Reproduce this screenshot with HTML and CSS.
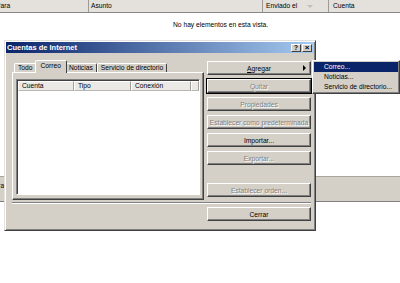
FILE: index.html
```html
<!DOCTYPE html>
<html lang="es">
<head>
    <meta charset="UTF-8">
    <title>Cuentas de Internet</title>
    <link rel="stylesheet" href="styles.css">
</head>
<body>

    <!-- Message list behind the dialog -->
    <div class="list-header">
        <div class="col col-para"><span class="clip">Para</span></div>
        <div class="col col-asunto">Asunto</div>
        <div class="col col-enviado">Enviado el<span class="sort"></span></div>
        <div class="col col-cuenta">Cuenta</div>
    </div>
    <div class="empty">No hay elementos en esta vista.</div>
    <div class="preview-bar"><span class="clip-r">Para</span></div>

    <!-- Internet accounts dialog -->
    <div class="dialog">
        <div class="titlebar">
            <span class="title">Cuentas de Internet</span>
            <span class="cap-btn">?</span>
            <span class="cap-btn close">×</span>
        </div>

        <div class="dialog-body">
            <div class="top-row">
                <div class="tabs-col">
                    <div class="tabs">
                        <div class="tab">Todo</div>
                        <div class="tab active">Correo</div>
                        <div class="tab">Noticias</div>
                        <div class="tab">Servicio de directorio</div>
                    </div>
                    <div class="panel">
                        <div class="accounts">
                            <div class="acc-header">
                                <div class="acc-col acc-cuenta">Cuenta</div>
                                <div class="acc-col acc-tipo">Tipo</div>
                                <div class="acc-col acc-conexion">Conexión</div>
                                <div class="acc-col acc-rest"></div>
                            </div>
                        </div>
                    </div>
                </div>

                <div class="buttons">
                    <div class="btn"><span><u>A</u>gregar</span><span class="arrow"></span></div>
                    <div class="btn disabled default">Quitar</div>
                    <div class="btn disabled">Propiedades</div>
                    <div class="btn disabled">Establecer como predeterminada</div>
                    <div class="btn">Importar...</div>
                    <div class="btn disabled">Exportar...</div>
                    <div class="btn disabled order">Establecer orden...</div>
                </div>
            </div>

            <div class="separator"></div>

            <div class="footer">
                <div class="btn">Cerrar</div>
            </div>
        </div>
    </div>

    <!-- Popup menu of the Agregar button -->
    <div class="menu">
        <div class="menu-item active">Correo...</div>
        <div class="menu-item">Noticias...</div>
        <div class="menu-item">Servicio de directorio...</div>
    </div>

</body>
</html>
```

FILE: styles.css
```css
body {
    margin: 0;
    width: 400px;
    height: 283px;
    overflow: hidden;
    position: relative;
    background: #fff;
    color: #000;
    font-family: "Liberation Sans", Arial, sans-serif;
    font-size: 6.7px;
}

/* Message list header */
.list-header {
    display: flex;
    height: 12px;
    background: #e4e1dc;
    border-bottom: 1px solid #8a8884;
}

.col {
    box-sizing: border-box;
    height: 12px;
    line-height: 12px;
    border-right: 1px solid #9c9a96;
    white-space: nowrap;
    overflow: hidden;
}

.col-para {
    width: 89px;
}

.clip {
    margin-left: -4px;
}

.col-asunto {
    width: 174px;
    padding-left: 2px;
}

.col-enviado {
    width: 66px;
    padding-left: 3px;
    display: flex;
    align-items: center;
}

.sort {
    width: 0;
    height: 0;
    margin-left: 10px;
    border-left: 3px solid transparent;
    border-right: 3px solid transparent;
    border-top: 3px solid #c0beb8;
}

.col-cuenta {
    flex: 1;
    padding-left: 4px;
    border-right: none;
}

.empty {
    height: 11px;
    line-height: 11px;
    margin-top: 6px;
    padding-left: 173px;
}

/* Gray bar behind the dialog */
.preview-bar {
    margin-top: 146px;
    height: 26px;
    box-sizing: border-box;
    background: #d4d0c8;
    border-top: 1px solid #a8a59e;
    border-bottom: 1px solid #808080;
    padding-top: 5px;
    overflow: hidden;
    white-space: nowrap;
}

.clip-r {
    margin-left: -10px;
}

/* Dialog window */
.dialog {
    position: absolute;
    left: 4px;
    top: 40px;
    width: 312px;
    height: 191px;
    box-sizing: border-box;
    background: #d4d0c8;
    border: 1px solid;
    border-color: #e4e2de #404040 #404040 #e4e2de;
    box-shadow: inset 1px 1px #fff, inset -1px -1px #808080;
    padding: 1px;
}

.titlebar {
    display: flex;
    align-items: center;
    height: 11px;
    padding-right: 2px;
    background: linear-gradient(to right, #0a246a, #a6caf0);
}

.title {
    flex: 1;
    color: #fff;
    font-weight: bold;
    font-size: 7.5px;
    padding-left: 1px;
    white-space: nowrap;
}

.cap-btn {
    box-sizing: border-box;
    width: 10px;
    height: 8px;
    margin-left: 1px;
    background: #d4d0c8;
    border: 1px solid;
    border-color: #fff #404040 #404040 #fff;
    font-weight: bold;
    font-size: 6.5px;
    line-height: 6px;
    text-align: center;
}

.cap-btn.close {
    font-size: 8px;
}

.dialog-body {
    padding: 7px 3px 0 6px;
}

.top-row {
    display: flex;
    height: 140px;
}

.tabs-col {
    width: 192px;
    display: flex;
    flex-direction: column;
}

.tabs {
    display: flex;
    align-items: flex-end;
    height: 12px;
    padding-left: 2px;
}

.tab {
    box-sizing: border-box;
    height: 9px;
    line-height: 8px;
    padding: 0 3px;
    border: 1px solid;
    border-bottom: none;
    border-color: #fff #404040 transparent #fff;
    border-radius: 2px 2px 0 0;
    white-space: nowrap;
}

.tab.active {
    position: relative;
    z-index: 1;
    height: 13px;
    line-height: 10px;
    margin: 0 -2px -1px;
    padding: 0 5px;
    background: #d4d0c8;
}

.panel {
    box-sizing: border-box;
    height: 128px;
    display: flex;
    border: 1px solid;
    border-color: #fff #404040 #404040 #fff;
    box-shadow: inset -1px -1px #808080;
    padding: 6px 3px 4px 3px;
}

.accounts {
    flex: 1;
    background: #fff;
    border: 1px solid;
    border-color: #808080 #fff #fff #808080;
    box-shadow: inset 1px 1px #404040;
    padding: 1px 0 0 1px;
}

.acc-header {
    display: flex;
    height: 10px;
}

.acc-col {
    box-sizing: border-box;
    height: 10px;
    line-height: 8px;
    padding-left: 3px;
    background: #ebe9e5;
    border: 1px solid;
    border-color: #fff #a09e9a #b8b6b2 #fff;
}

.acc-cuenta {
    width: 56px;
}

.acc-tipo {
    width: 57px;
}

.acc-conexion {
    width: 60px;
}

.acc-rest {
    flex: 1;
}

/* Command buttons */
.buttons {
    width: 104px;
    margin-left: 3px;
    padding-top: 1px;
    display: flex;
    flex-direction: column;
    gap: 4px;
}

.btn {
    box-sizing: border-box;
    height: 14px;
    display: flex;
    align-items: center;
    justify-content: center;
    position: relative;
    background: #d4d0c8;
    border: 1px solid;
    border-color: #fff #404040 #404040 #fff;
    box-shadow: inset -1px -1px #808080;
    white-space: nowrap;
}

.btn.default {
    outline: 1px solid #000;
}

.btn.disabled {
    color: #808080;
    text-shadow: 1px 1px 0 #fff;
}

.btn.order {
    margin-top: 14px;
}

.arrow {
    position: absolute;
    right: 4px;
    top: 3px;
    width: 0;
    height: 0;
    border-top: 3px solid transparent;
    border-bottom: 3px solid transparent;
    border-left: 3px solid #000;
}

.separator {
    margin-top: 2px;
    border-top: 1px solid #808080;
    border-bottom: 1px solid #fff;
}

.footer {
    display: flex;
    justify-content: flex-end;
    margin-top: 3px;
}

.footer .btn {
    width: 104px;
}

/* Popup menu */
.menu {
    position: absolute;
    left: 312px;
    top: 60px;
    width: 88px;
    box-sizing: border-box;
    background: #d4d0c8;
    border: 1px solid;
    border-color: #fff #404040 #404040 #fff;
    box-shadow: inset -1px -1px #808080;
    padding: 1px;
}

.menu-item {
    height: 10px;
    line-height: 10px;
    padding-left: 10px;
    white-space: nowrap;
}

.menu-item.active {
    background: #0a246a;
    color: #fff;
}
```
